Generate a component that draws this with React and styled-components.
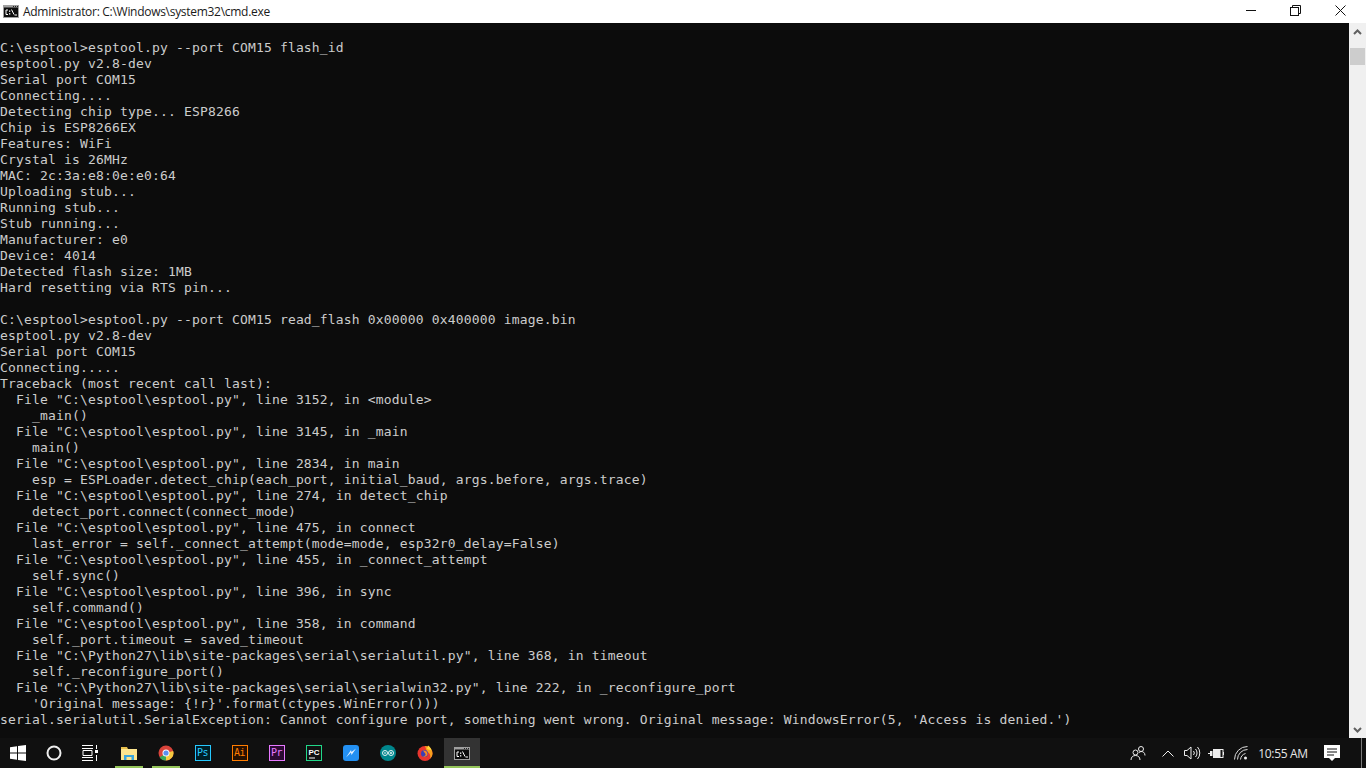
import React from "react"
import styled, { createGlobalStyle } from "styled-components"

const GlobalStyle = createGlobalStyle`
  html, body { margin: 0; padding: 0; height: 100%; overflow: hidden; background: #0c0c0c; }
  #root { height: 100%; }
`

const LINES = [
  "",
  "C:\\esptool>esptool.py --port COM15 flash_id",
  "esptool.py v2.8-dev",
  "Serial port COM15",
  "Connecting....",
  "Detecting chip type... ESP8266",
  "Chip is ESP8266EX",
  "Features: WiFi",
  "Crystal is 26MHz",
  "MAC: 2c:3a:e8:0e:e0:64",
  "Uploading stub...",
  "Running stub...",
  "Stub running...",
  "Manufacturer: e0",
  "Device: 4014",
  "Detected flash size: 1MB",
  "Hard resetting via RTS pin...",
  "",
  "C:\\esptool>esptool.py --port COM15 read_flash 0x00000 0x400000 image.bin",
  "esptool.py v2.8-dev",
  "Serial port COM15",
  "Connecting.....",
  "Traceback (most recent call last):",
  "  File \"C:\\esptool\\esptool.py\", line 3152, in <module>",
  "    _main()",
  "  File \"C:\\esptool\\esptool.py\", line 3145, in _main",
  "    main()",
  "  File \"C:\\esptool\\esptool.py\", line 2834, in main",
  "    esp = ESPLoader.detect_chip(each_port, initial_baud, args.before, args.trace)",
  "  File \"C:\\esptool\\esptool.py\", line 274, in detect_chip",
  "    detect_port.connect(connect_mode)",
  "  File \"C:\\esptool\\esptool.py\", line 475, in connect",
  "    last_error = self._connect_attempt(mode=mode, esp32r0_delay=False)",
  "  File \"C:\\esptool\\esptool.py\", line 455, in _connect_attempt",
  "    self.sync()",
  "  File \"C:\\esptool\\esptool.py\", line 396, in sync",
  "    self.command()",
  "  File \"C:\\esptool\\esptool.py\", line 358, in command",
  "    self._port.timeout = saved_timeout",
  "  File \"C:\\Python27\\lib\\site-packages\\serial\\serialutil.py\", line 368, in timeout",
  "    self._reconfigure_port()",
  "  File \"C:\\Python27\\lib\\site-packages\\serial\\serialwin32.py\", line 222, in _reconfigure_port",
  "    'Original message: {!r}'.format(ctypes.WinError()))",
  "serial.serialutil.SerialException: Cannot configure port, something went wrong. Original message: WindowsError(5, 'Access is denied.')",
]

const Screen = styled.div`
  width: 1366px;
  height: 768px;
  display: flex;
  flex-direction: column;
  overflow: hidden;
`
const TitleBar = styled.div`
  height: 23px;
  flex: none;
  background: #fff;
  display: flex;
  align-items: center;
  padding-left: 3px;
`
const TitleText = styled.div`
  margin-left: 4px;
  font: 12px "Open Sans", "Noto Sans", sans-serif;
  color: #1a1a1a;
  letter-spacing: -0.29px;
`
const WinButtons = styled.div`
  margin-left: auto;
  display: flex;
  height: 100%;
  box-sizing: border-box;
  padding: 0 3px 3px 0;
`
const WinButton = styled.div`
  width: 45px;
  display: flex;
  align-items: center;
  justify-content: center;
`
const Body = styled.div`
  flex: 1;
  display: flex;
  min-height: 0;
`
const Console = styled.pre`
  flex: 1;
  margin: 0;
  padding-top: 1px;
  background: #0c0c0c;
  color: #cccccc;
  font: 13px/16px "DejaVu Sans Mono", "Liberation Mono", monospace;
  letter-spacing: 0.17px;
  overflow: hidden;
`
const Scrollbar = styled.div`
  width: 17px;
  flex: none;
  background: #f0f0f0;
  display: flex;
  flex-direction: column;
  align-items: center;
`
const ScrollArrow = styled.div`
  height: 25px;
  flex: none;
  box-sizing: border-box;
  display: flex;
  align-items: center;
  justify-content: center;
  padding-bottom: ${(p) => (p.$up ? 7 : 0)}px;
  padding-top: ${(p) => (p.$up ? 0 : 9)}px;
`
const ScrollThumb = styled.div`
  width: 15px;
  height: 17px;
  background: #cdcdcd;
`
const ScrollSpacer = styled.div`
  flex: 1;
`
const Taskbar = styled.div`
  height: 30px;
  flex: none;
  background: #101010;
  display: flex;
  align-items: stretch;
`
const TaskItem = styled.div`
  width: ${(p) => p.$w || 37}px;
  margin-left: ${(p) => p.$ml || 0}px;
  flex: none;
  display: flex;
  align-items: center;
  justify-content: center;
  position: relative;
  background: ${(p) => (p.$active ? "#333333" : "transparent")};
  &::after {
    content: "";
    display: ${(p) => (p.$open ? "block" : "none")};
    position: absolute;
    left: ${(p) => (p.$active ? 0 : 5)}px;
    right: ${(p) => (p.$active ? 0 : 4)}px;
    bottom: 0;
    height: 2px;
    background: #95c65a;
  }
`
const Tray = styled.div`
  margin-left: auto;
  display: flex;
  align-items: center;
  padding-right: 4px;
`
const TrayIcon = styled.div`
  width: ${(p) => p.$w || 24}px;
  display: flex;
  align-items: center;
  justify-content: center;
`
const Clock = styled.div`
  font: 12px "Open Sans", "Noto Sans", sans-serif;
  color: #e6e6e6;
  letter-spacing: -0.35px;
  width: 56px;
  text-align: center;
  margin-left: 2px;
`
const DesktopDivider = styled.div`
  width: 1px;
  height: 30px;
  margin-left: 8px;
  background: #7a7a7a;
`
const AppBox = styled.div`
  width: 16px;
  height: 16px;
  box-sizing: border-box;
  border: 1px solid ${(p) => p.$c};
  background: ${(p) => p.$bg};
  color: ${(p) => p.$c};
  font: 10px/14px "DejaVu Sans Mono", "Liberation Mono", monospace;
  text-align: center;
  letter-spacing: -0.5px;
`
const CmdIcon = () => (
  <svg width="16" height="13" viewBox="0 0 16 13">
    <rect width="16" height="13" fill="#a0a0a0" />
    <rect x="1" y="2.500" width="14" height="9.500" fill="#0c0c0c" />
    <rect x="10" y="1" width="1" height="1" fill="#222" />
    <rect x="12" y="1" width="1" height="1" fill="#222" />
    <rect x="14" y="1" width="1" height="1" fill="#222" />
    <path d="M5 5H3v4.500h2M8.500 4.500l2.500 5M11.500 10H14" stroke="#fff" fill="none" />
    <rect x="6" y="5.500" width="1.300" height="1.300" fill="#fff" />
    <rect x="6" y="8.200" width="1.300" height="1.300" fill="#fff" />
  </svg>
)

export default function App() {
  return (
    <Screen>
      <GlobalStyle />
      <TitleBar>
        <CmdIcon />
        <TitleText>Administrator: C:\Windows\system32\cmd.exe</TitleText>
        <WinButtons>
          <WinButton>
            <svg width="10" height="10" viewBox="0 0 10 10"><path d="M0 5.500h10" stroke="#111" /></svg>
          </WinButton>
          <WinButton>
            <svg width="11" height="11" viewBox="0 0 11 11" fill="none" stroke="#111">
              <rect x="0.500" y="2.500" width="8" height="8" />
              <path d="M2.500 2.500v-2h8v8h-2" />
            </svg>
          </WinButton>
          <WinButton>
            <svg width="11" height="11" viewBox="0 0 11 11" fill="none" stroke="#111"><path d="M.5.500l10 10M10.500.500l-10 10" /></svg>
          </WinButton>
        </WinButtons>
      </TitleBar>
      <Body>
        <Console>{LINES.join("\n")}</Console>
        <Scrollbar>
          <ScrollArrow $up>
            <svg width="9" height="6" viewBox="0 0 9 6" fill="none" stroke="#606060" strokeWidth="2"><path d="M1 5l3.500-3.500L8 5" /></svg>
          </ScrollArrow>
          <ScrollThumb />
          <ScrollSpacer />
          <ScrollArrow>
            <svg width="9" height="6" viewBox="0 0 9 6" fill="none" stroke="#606060" strokeWidth="2"><path d="M1 1l3.500 3.500L8 1" /></svg>
          </ScrollArrow>
        </Scrollbar>
      </Body>
      <Taskbar>
        <TaskItem $w={36}>
          <svg width="16" height="16" viewBox="0 0 16 16" fill="#fff"><path d="M0 2.300l7-1v6.300H0zM8 1.100L16 0v7.600H8zM0 8.500h7v6.200l-7-1zM8 8.500h8V16l-8-1.100z" /></svg>
        </TaskItem>
        <TaskItem $w={36}>
          <svg width="16" height="16" viewBox="0 0 16 16" fill="none" stroke="#eee" strokeWidth="2"><circle cx="8" cy="8" r="6.500" /></svg>
        </TaskItem>
        <TaskItem $w={36}>
          <svg width="16" height="16" viewBox="0 0 16 16" fill="none" stroke="#fff"><path d="M0 .500h11M0 3.500h11M1 5.500h9v5H1zM0 12.500h11M0 15.500h11M14.500 0v4M14.500 10v6" /><rect x="13" y="5" width="3" height="3" fill="#fff" stroke="none" /></svg>
        </TaskItem>
        <TaskItem $open $ml={2}>
          <svg width="16" height="14" viewBox="0 0 16 14"><path d="M0 1h6l1 2H0z" fill="#e8c04c" /><rect y="3" width="16" height="11" fill="#fde58f" /><path d="M3 14v-5h10v5h-2.500v-3h-5v3z" fill="#3aa6dd" /></svg>
        </TaskItem>
        <TaskItem $open>
          <svg width="16" height="16" viewBox="0 0 16 16">
            <circle cx="8" cy="8" r="7.500" fill="#d8433a" />
            <path d="M8 8L1.500 12.500A7.500 7.500 0 0 0 8 15.500z" fill="#3aa757" />
            <path d="M8 8l7.200-2A7.500 7.500 0 0 1 8 15.500z" fill="#f6c93f" />
            <circle cx="8" cy="8" r="3.500" fill="#fff" />
            <circle cx="8" cy="8" r="2.600" fill="#5a8ff0" />
          </svg>
        </TaskItem>
        <TaskItem><AppBox $c="#26c9ff" $bg="#001d26">Ps</AppBox></TaskItem>
        <TaskItem><AppBox $c="#ff7c00" $bg="#261000">Ai</AppBox></TaskItem>
        <TaskItem><AppBox $c="#e779ff" $bg="#2b0a33">Pr</AppBox></TaskItem>
        <TaskItem>
          <svg width="16" height="16" viewBox="0 0 16 16"><rect x=".5" y=".5" width="15" height="15" fill="#111" stroke="#21d789" /><text x="2.500" y="9.500" fontSize="8" fontWeight="bold" fontFamily="Liberation Sans" fill="#fff">PC</text><path d="M3 13h6" stroke="#fff" /></svg>
        </TaskItem>
        <TaskItem>
          <svg width="16" height="16" viewBox="0 0 16 16"><rect width="16" height="16" rx="3" fill="#2390f2" /><path d="M3 12.500l5-5 .5 2.500L13 3.500 8.500 7 8 5z" fill="#e6f2ff" /></svg>
        </TaskItem>
        <TaskItem>
          <svg width="16" height="16" viewBox="0 0 16 16" fill="none"><circle cx="8" cy="8" r="8" fill="#00868c" /><circle cx="5" cy="8" r="2.500" stroke="#e8f4f4" /><circle cx="11" cy="8" r="2.500" stroke="#e8f4f4" /><path d="M4 8h2M10 8h2M11 7v2" stroke="#e8f4f4" /></svg>
        </TaskItem>
        <TaskItem>
          <svg width="16" height="16" viewBox="0 0 16 16"><circle cx="8" cy="8.500" r="7.500" fill="#e8352e" /><path d="M8 1c4 0 7.500 3 7.500 7.500 0 2-1 4-2.500 5 1-3-.5-6-3-6.500z" fill="#f8a01d" /><path d="M11 .5c1.500 1 3 2.500 3.500 5L10 4z" fill="#ffd53a" /><circle cx="7.500" cy="8.500" r="3.500" fill="#3b3fb5" /><path d="M6 5.500c3-.5 5 1.500 4.500 4-.5 2-3 3-5 1.500 2 .5 3.500-.5 3-2z" fill="#f7861f" /></svg>
        </TaskItem>
        <TaskItem $w={36} $ml={1} $active $open><CmdIcon /></TaskItem>
        <Tray>
          <TrayIcon $w={34}>
            <svg width="16" height="16" viewBox="0 0 16 16" fill="none" stroke="#eee"><circle cx="11" cy="4" r="2.500" /><circle cx="5.500" cy="7.500" r="2.500" /><path d="M1 15c0-3 2-4.500 4.500-4.500S10 12 10 15M9 7.500c1-.5 1.500-1 2-1 2 0 4 1 4 4" /></svg>
          </TrayIcon>
          <TrayIcon $w={26}>
            <svg width="12" height="7" viewBox="0 0 12 7" fill="none" stroke="#eee"><path d="M.5 6.500L6 1l5.500 5.500" /></svg>
          </TrayIcon>
          <TrayIcon $w={22}>
            <svg width="17" height="14" viewBox="0 0 17 14" fill="none" stroke="#eee"><path d="M.5 4.500h2.500L7 1v12L3 9.500H.5zM9.500 5a3 3 0 0 1 0 4M11.500 3a6 6 0 0 1 0 8M13.500 1a9 9 0 0 1 0 12" /></svg>
          </TrayIcon>
          <TrayIcon $w={26}>
            <svg width="16" height="11" viewBox="0 0 16 11" fill="none" stroke="#eee"><rect x="5.500" y="1.500" width="9.500" height="8" /><rect x="6" y="2" width="6.500" height="7" fill="#eee" stroke="none" /><path d="M15.500 4v3M0 5.500h2" /><rect x="2" y="3" width="2.500" height="5" fill="#eee" stroke="none" /></svg>
          </TrayIcon>
          <TrayIcon $w={24}>
            <svg width="14" height="14" viewBox="0 0 14 14" fill="none" stroke="#ddd"><path d="M.5 13.500A13 13 0 0 1 13.500.500M3.500 13.500a10 10 0 0 1 10-10M6.500 13.500a7 7 0 0 1 5-6" /><circle cx="11.500" cy="12" r="1.500" fill="#eee" stroke="none" /></svg>
          </TrayIcon>
          <Clock>10:55 AM</Clock>
          <TrayIcon $w={42}>
            <svg width="16" height="16" viewBox="0 0 16 16"><path d="M0 0h16v13h-5l-3 3-3-3H0z" fill="#fff" /><path d="M3 4h10M3 7h10M3 10h7" stroke="#111" /></svg>
          </TrayIcon>
          <DesktopDivider />
        </Tray>
      </Taskbar>
    </Screen>
  )
}
